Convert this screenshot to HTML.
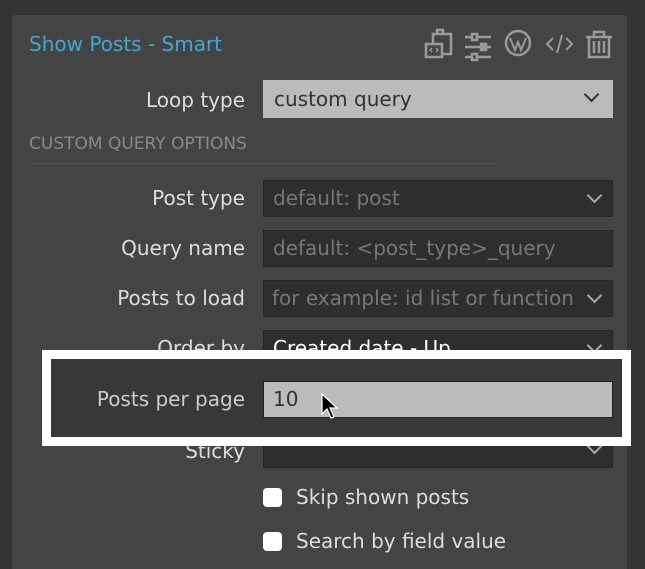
<!DOCTYPE html>
<html style="overflow:hidden"><head><meta charset="utf-8"><style>
*{box-sizing:border-box;margin:0;padding:0}
html,body{width:645px;height:569px;overflow:hidden}
body{background:#333;position:relative;font-family:"DejaVu Sans",sans-serif}
.panel{position:absolute;left:12px;top:15px;width:615px;height:554px;background:#444;border-radius:3px 3px 0 0}
.t{position:absolute;font-size:20px;white-space:nowrap}
.lab{position:absolute;right:400px;color:#ddd;font-size:20px;text-align:right;white-space:nowrap}
.f{position:absolute;left:263px;width:350px;height:37px;background:#2e2e2e;border:1px solid #262626;color:#777;font-size:20px;padding:5px 9px;white-space:nowrap;overflow:hidden}
.chev{position:absolute;right:12px;top:9px;width:11px;height:11px;border-right:2px solid #aaa;border-bottom:2px solid #aaa;transform:rotate(45deg);background:#2e2e2e}
.cb{position:absolute;left:263px;width:19px;height:19px;background:#fff;border-radius:4px}
</style></head><body>
<div class="panel"></div>
<div class="t" style="left:29px;top:32px;color:#3fa9cf">Show Posts - Smart</div>
<svg style="position:absolute;left:420px;top:26px" width="200" height="36" viewBox="0 0 200 36" fill="none" stroke="#9a9a9a" stroke-width="2.5">
<rect x="6" y="18" width="16" height="13"/><path d="M13 17V8h18v20h-9M17 8V4h6v4"/><path d="M12 22l-2 2 2 2M16 22l2 2-2 2" stroke-width="1.5"/>
<path d="M45 11h26M45 21h26M45 31h26"/><rect x="52" y="8" width="5" height="6" fill="#444"/><rect x="61" y="18" width="5" height="6" fill="#9a9a9a"/><rect x="52" y="28" width="5" height="6" fill="#444"/>
<circle cx="98" cy="17" r="12"/><path d="M90 12l5 12 3-8 3 8 5-12" stroke-width="2"/>
<path d="M133 12l-6 6 6 6M146 12l6 6-6 6M142 9l-5 18" stroke-width="2"/>
<path d="M166 11h26M174 11V6h10v5M169 11v20h20V11M174 15v12M179 15v12M184 15v12"/>
</svg>
<div class="lab" style="top:88px">Loop type</div>
<div class="f" style="top:80px;height:38px;background:#bbb;border:none;color:#333;font-size:20px;padding:7px 11px">custom query<div class="chev" style="border-color:#333;right:16px;background:#bbb"></div></div>
<div class="t" style="left:29px;top:134px;color:#8a8a8a;font-size:17px">CUSTOM QUERY OPTIONS</div>
<div style="position:absolute;left:29px;top:163px;width:467px;height:1px;background:#4e4e4e"></div>
<div class="lab" style="top:186px">Post type</div>
<div class="f" style="top:180px">default: post<div class="chev"></div></div>
<div class="lab" style="top:236px">Query name</div>
<div class="f" style="top:230px">default: &lt;post_type&gt;_query</div>
<div class="lab" style="top:286px">Posts to load</div>
<div class="f" style="top:280px;padding-right:30px;padding-left:8px">for example: id list or function<div class="chev"></div></div>
<div class="lab" style="top:336px">Order by</div>
<div class="f" style="top:330px;color:#fff">Created date - Up<div class="chev"></div></div>
<div class="lab" style="top:439px">Sticky</div>
<div class="f" style="top:431px"><div class="chev"></div></div>
<div style="position:absolute;left:42px;top:350px;width:589px;height:96px;border:9px solid #fff;background:#383838"></div>
<div class="lab" style="top:387px;color:#ccc">Posts per page</div>
<div class="f" style="top:381px;background:#bbb;border:1px solid #222;color:#333">10</div>
<svg style="position:absolute;left:321px;top:393px" width="20" height="28" viewBox="0 0 20 28"><path d="M1 1v20l5-5 4 9 3-1-4-9h7z" fill="#000" stroke="#fff" stroke-width="1.2"/></svg>
<div class="cb" style="top:488px"></div>
<div class="t" style="left:296px;top:485px;color:#ddd">Skip shown posts</div>
<div class="cb" style="top:532px"></div>
<div class="t" style="left:296px;top:529px;color:#ddd">Search by field value</div>
</body></html>
